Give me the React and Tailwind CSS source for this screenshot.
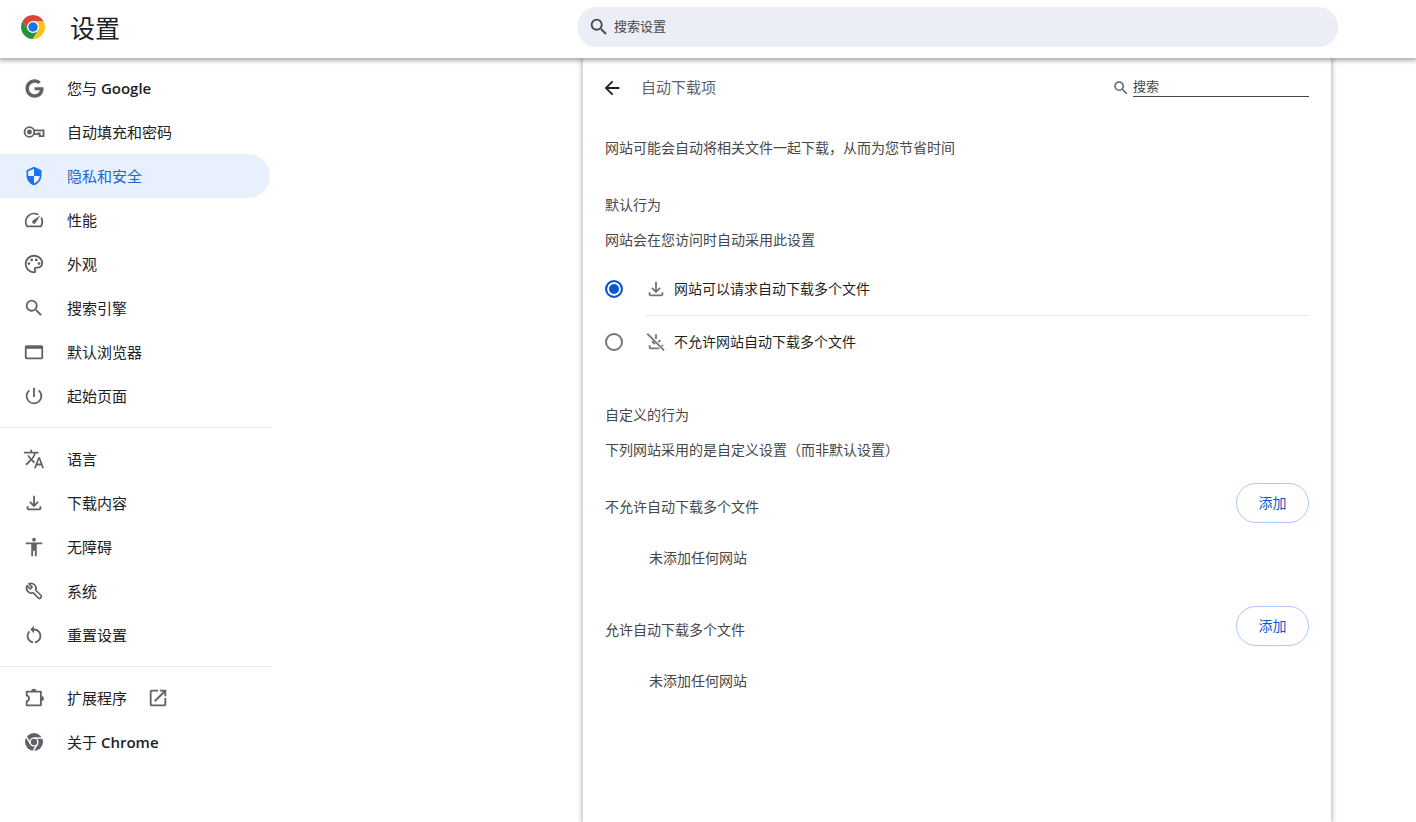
import React, { useState } from 'react';
import { FaGoogle } from 'react-icons/fa';
import {
    MdAccessibility,
    MdArrowBack,
    MdOpenInNew,
    MdOutlinePalette,
    MdOutlineSpeed,
    MdPowerSettingsNew,
    MdRestartAlt,
    MdSearch,
    MdSecurity,
    MdTranslate,
} from 'react-icons/md';

const ChromeLogo = ({ className }) => (
    <svg viewBox="0 0 48 48" className={className} aria-hidden="true">
        <path d="M24 12h20.78A24 24 0 0 0 3.22 12l10.39 18z" fill="#db4437" />
        <path d="M13.6 30 3.22 12A24 24 0 0 0 24 48l10.4-18z" fill="#229342" />
        <path d="M34.4 30 24 48a24 24 0 0 0 20.78-36H24z" fill="#fbc116" />
        <circle cx="24" cy="24" r="12" fill="#fff" />
        <circle cx="24" cy="24" r="9.5" fill="#1a73e8" />
    </svg>
);

const ChromeIcon = ({ className }) => (
    <svg viewBox="0 0 24 24" className={className} aria-hidden="true">
        <circle cx="12" cy="12" r="9.8" fill="currentColor" />
        <circle cx="12" cy="12" r="5" fill="#fff" />
        <g stroke="#fff" strokeWidth="1.6">
            <path d="M12 7.7h10" />
            <path d="M12 7.7h10" transform="rotate(120 12 12)" />
            <path d="M12 7.7h10" transform="rotate(240 12 12)" />
        </g>
        <circle cx="12" cy="12" r="3.5" fill="currentColor" />
    </svg>
);

const StrokeIcon = ({ className, children }) => (
    <svg viewBox="0 0 24 24" className={className} fill="none" stroke="currentColor" strokeWidth="2" aria-hidden="true">
        {children}
    </svg>
);

const GoogleIcon = ({ className }) => (
    <span className={`${className} flex items-center justify-center`}>
        <FaGoogle className="h-[19px] w-[19px]" />
    </span>
);

const ShieldIcon = ({ className }) => (
    <span className={`${className} flex items-center justify-center`}>
        <MdSecurity className="h-5 w-5" />
    </span>
);

const WrenchIcon = ({ className }) => (
    <StrokeIcon className={className}>
        <path
            d="M4.4 6.2 8 9.8 10 7.8 6.4 4.2A5.6 5.6 0 0 1 14 11.2l5.7 5.7a1.5 1.5 0 0 1 0 2.1l-.7.7a1.5 1.5 0 0 1-2.1 0L11.2 14A5.6 5.6 0 0 1 4.4 6.2z"
            strokeWidth="1.8"
            strokeLinejoin="round"
        />
    </StrokeIcon>
);

const KeyIcon = ({ className }) => (
    <StrokeIcon className={className}>
        <circle cx="7" cy="12" r="5.3" />
        <circle cx="7" cy="12" r="2.7" fill="currentColor" stroke="none" />
        <path d="M12 10.2h10.4v6.3h-4.2v-3h-1.6v.9H12" />
    </StrokeIcon>
);

const BrowserIcon = ({ className }) => (
    <StrokeIcon className={className}>
        <rect x="3" y="5.6" width="18" height="13.4" rx="1" />
        <path d="M3 7h18" strokeWidth="3" />
    </StrokeIcon>
);

const DownloadIcon = ({ className }) => (
    <StrokeIcon className={className}>
        <path d="M12 4v11M7.5 10.7l4.5 4.5 4.5-4.5M5 15.5V18q0 1 1 1h12q1 0 1-1v-2.5" />
    </StrokeIcon>
);

const DownloadOffIcon = ({ className }) => (
    <StrokeIcon className={className}>
        <path d="M12 3.5v5.3M14.6 12.2l2.2-2.2M7.6 11.2l3.2 3.2M5 15.5V18q0 1 1 1h9.5M19 15v2" />
        <path d="M2.4 2.8 20.8 21.2" />
    </StrokeIcon>
);

const PuzzleIcon = ({ className }) => (
    <StrokeIcon className={className}>
        <path d="M4 5h15.5v15H4v-4.2q2.6-.8 2.6-3.3T4 9.2z" strokeLinejoin="round" />
        <path d="M9 4.6a2.8 2.8 0 0 1 5.6 0zM20 9.7a2.8 2.8 0 0 1 0 5.6z" fill="currentColor" stroke="none" />
    </StrokeIcon>
);

const menuGroups = [
    [
        { label: '您与', latin: 'Google', icon: GoogleIcon },
        { label: '自动填充和密码', icon: KeyIcon },
        { label: '隐私和安全', icon: ShieldIcon },
        { label: '性能', icon: MdOutlineSpeed },
        { label: '外观', icon: MdOutlinePalette },
        { label: '搜索引擎', icon: MdSearch },
        { label: '默认浏览器', icon: BrowserIcon },
        { label: '起始页面', icon: MdPowerSettingsNew },
    ],
    [
        { label: '语言', icon: MdTranslate },
        { label: '下载内容', icon: DownloadIcon },
        { label: '无障碍', icon: MdAccessibility },
        { label: '系统', icon: WrenchIcon },
        { label: '重置设置', icon: MdRestartAlt },
    ],
    [
        { label: '扩展程序', icon: PuzzleIcon, external: true },
        { label: '关于', latin: 'Chrome', icon: ChromeIcon },
    ],
];

const behaviors = [
    { value: 'ask', label: '网站可以请求自动下载多个文件', icon: DownloadIcon },
    { value: 'block', label: '不允许网站自动下载多个文件', icon: DownloadOffIcon },
];

const Header = () => (
    <header className="relative z-10 flex h-[58px] items-center bg-white shadow-[0_2px_4px_1px_rgba(0,0,0,0.3)]">
        <ChromeLogo className="ml-[21px] mb-1 h-6 w-6 shrink-0" />
        <h1 className="ml-[25px] shrink-0 text-[25px] text-[#202124]">设置</h1>
        <label className="mr-[78px] mb-1 ml-auto flex h-10 w-full max-w-[761px] items-center rounded-full bg-[#ebeef7] pl-[11px] text-[#474747]">
            <MdSearch className="h-[22px] w-[22px] shrink-0" />
            <input
                type="text"
                placeholder="搜索设置"
                aria-label="搜索设置"
                className="ml-1 min-w-0 flex-1 bg-transparent text-[13px] outline-none placeholder:text-[#474747]"
            />
        </label>
    </header>
);

const Sidebar = ({ active, onSelect }) => (
    <nav className="w-[272px] shrink-0 pt-2">
        {menuGroups.map((group, i) => (
            <ul key={i} className={i > 0 ? 'mt-[9px] border-t border-[#e8e8e8] pt-[9px]' : ''}>
                {group.map(({ label, latin, icon: Icon, external }) => (
                    <li key={label}>
                        <a
                            href="#"
                            onClick={() => onSelect(label)}
                            className={`mr-0.5 flex h-11 items-center rounded-r-full pl-[23px] text-[15px] ${active === label ? 'bg-[#e8f0fe] text-[#1967d2]' : 'text-[#202124]'}`}
                        >
                            <Icon className={`h-[22px] w-[22px] shrink-0 ${active === label ? 'text-[#1a73e8]' : 'text-[#5f6368]'}`} />
                            <span className="ml-[22px] pt-px">
                                {label}
                                {latin && <span className="font-semibold"> {latin}</span>}
                            </span>
                            {external && <MdOpenInNew className="ml-5 h-[22px] w-[22px] text-[#5f6368]" />}
                        </a>
                    </li>
                ))}
            </ul>
        ))}
    </nav>
);

const SiteList = ({ title, className }) => (
    <section className={className}>
        <div className="flex items-center justify-between">
            <h3 className="pt-2">{title}</h3>
            <button className="h-10 w-[73px] rounded-full border border-[#a8c7fa] text-[#0b57d0] hover:bg-blue-50">
                添加
            </button>
        </div>
        <p className="mt-[25px] pl-11">未添加任何网站</p>
    </section>
);

const DownloadSettings = () => {
    const [behavior, setBehavior] = useState('ask');

    return (
        <main className="mr-[85px] ml-auto w-full max-w-[748px] bg-white px-[22px] text-sm text-[#474747] shadow-[0_0_5px_1px_rgba(0,0,0,0.3)]">
            <div className="flex h-[60px] items-center">
                <button aria-label="返回" className="-ml-1 text-[#1f1f1f]">
                    <MdArrowBack className="h-[22px] w-[22px]" />
                </button>
                <h2 className="ml-[18px] text-[15px] text-[#5f6368]">自动下载项</h2>
                <label className="ml-auto flex items-center gap-[3px] text-[#5f6368]">
                    <MdSearch className="h-[18px] w-[18px]" />
                    <input
                        type="text"
                        placeholder="搜索"
                        aria-label="搜索"
                        className="mb-[3px] h-[21px] w-44 border-b border-[#474747] bg-transparent text-[13px] outline-none placeholder:text-[#474747]"
                    />
                </label>
            </div>

            <p className="mt-5">网站可能会自动将相关文件一起下载，从而为您节省时间</p>

            <h3 className="mt-[37px]">默认行为</h3>
            <p className="mt-[15px]">网站会在您访问时自动采用此设置</p>

            <div className="mt-3 text-[#1f1f1f]">
                {behaviors.map(({ value, label, icon: Icon }, i) => (
                    <label key={value} className="flex items-center">
                        <input
                            type="radio"
                            name="behavior"
                            value={value}
                            checked={behavior === value}
                            onChange={() => setBehavior(value)}
                            className="h-[18px] w-[18px] shrink-0 appearance-none rounded-full border-2 border-[#747775] checked:border-[#0b57d0] checked:bg-[#0b57d0] checked:shadow-[inset_0_0_0_2px_#fff]"
                        />
                        <span className={`ml-[22px] flex flex-1 items-center ${i === 0 ? 'h-[54px] border-b border-[#ebebeb]' : 'h-[52px]'}`}>
                            <Icon className="h-[22px] w-[22px] text-[#747775]" />
                            <span className="ml-[7px]">{label}</span>
                        </span>
                    </label>
                ))}
            </div>

            <h3 className="mt-[37px]">自定义的行为</h3>
            <p className="mt-[15px]">下列网站采用的是自定义设置（而非默认设置）</p>

            <SiteList title="不允许自动下载多个文件" className="mt-[23px]" />
            <SiteList title="允许自动下载多个文件" className="mt-[38px]" />
        </main>
    );
};

export default function App() {
    const [active, setActive] = useState('隐私和安全');

    return (
        <div className="flex min-h-screen flex-col bg-white font-['Open_Sans','Noto_Sans_CJK_SC',sans-serif]">
            <Header />
            <div className="flex flex-1">
                <Sidebar active={active} onSelect={setActive} />
                <DownloadSettings />
            </div>
        </div>
    );
}
